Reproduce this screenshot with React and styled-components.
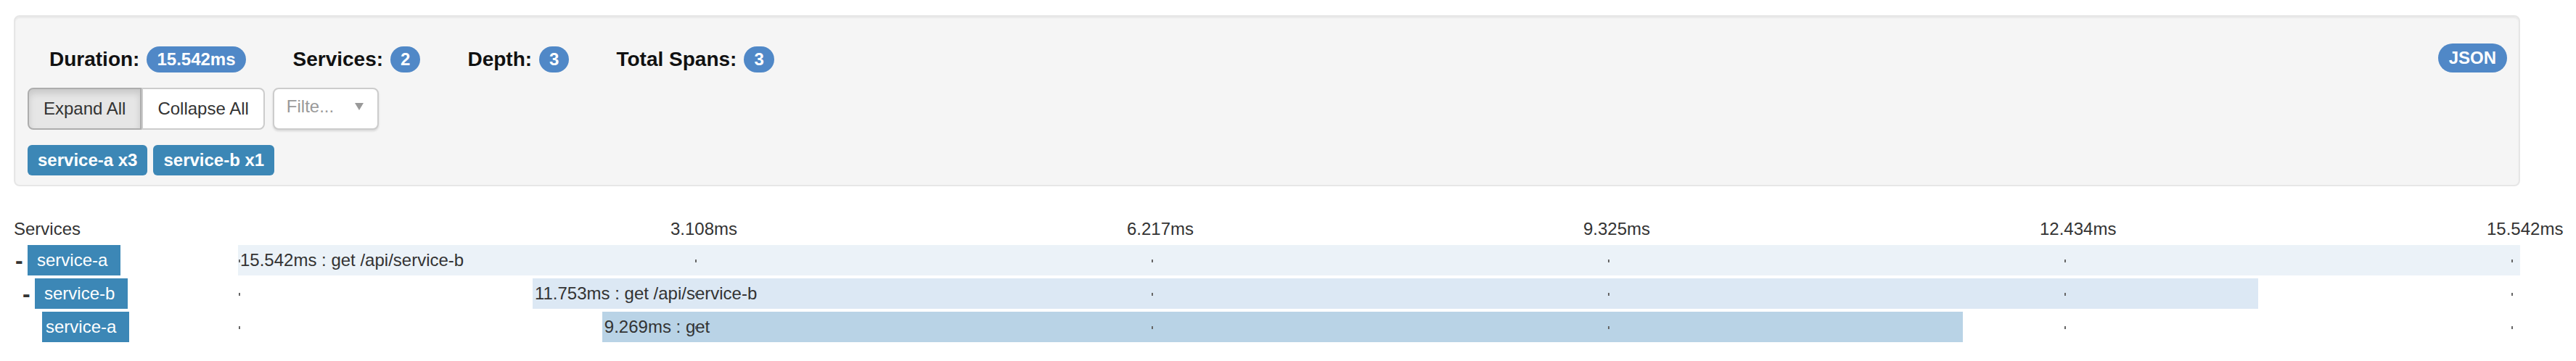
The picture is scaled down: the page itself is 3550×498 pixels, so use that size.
import React from 'react';
import styled, { createGlobalStyle } from 'styled-components';

const GlobalStyle = createGlobalStyle`
  html, body { margin: 0; padding: 0; background: #fff; }
  body {
    font-family: "Liberation Sans", Arial, Helvetica, sans-serif;
    color: #333;
  }
  * { box-sizing: border-box; }
`;

const Page = styled.div`
  width: 3550px;
  padding: 21px 77px 0 19px;
`;

const Well = styled.div`
  height: 236px;
  background: #f5f5f5;
  border: 2px solid #e6e6e6;
  border-radius: 8px;
  box-shadow: inset 0 2px 2px rgba(0, 0, 0, 0.05);
  padding: 18px 16px 13px 17px;
`;

const SummaryRow = styled.div`
  display: flex;
  align-items: center;
  gap: 65px;
  height: 36px;
  margin: 23px 0 21px;
  padding-left: 30px;
`;

const Stat = styled.div`
  display: flex;
  align-items: center;
`;

const StatLabel = styled.span`
  font-size: 28px;
  font-weight: 700;
  line-height: 36px;
  color: #111;
`;

const Badge = styled.span`
  display: inline-block;
  margin-left: 10px;
  padding: 6px 14px;
  font-size: 24px;
  font-weight: 700;
  line-height: 24px;
  color: #fff;
  background: #5088c7;
  border-radius: 20px;
`;

const JsonBadge = styled(Badge)`
  margin: -4px 0 0 auto;
  padding: 8px 15px;
  cursor: pointer;
`;

const ControlsRow = styled.div`
  display: flex;
  gap: 11px;
  height: 58px;
  margin-bottom: 21px;
`;

const BtnGroup = styled.div`
  display: flex;
`;

const Btn = styled.button`
  font-family: inherit;
  font-size: 24px;
  line-height: 34px;
  padding: 10px 20px;
  color: #333;
  background: ${p => (p.$active ? '#e6e6e6' : '#fff')};
  border: 2px solid ${p => (p.$active ? '#adadad' : '#ccc')};
  box-shadow: ${p => (p.$active ? 'inset 0 6px 10px rgba(0,0,0,0.125)' : 'none')};
  border-radius: ${p => (p.$first ? '8px 0 0 8px' : '0 8px 8px 0')};
  ${p => (!p.$first ? 'border-left-color: #ccc;' : '')}
  margin: 0;
  cursor: pointer;
`;

const Select = styled.div`
  width: 146px;
  height: 58px;
  display: flex;
  align-items: center;
  justify-content: space-between;
  padding: 0 19px 6px 17px;
  background: #fff;
  border: 2px solid #ccc;
  border-radius: 8px;
  box-shadow: 0 2px 3px rgba(0, 0, 0, 0.12);
`;

const Placeholder = styled.span`
  font-size: 24px;
  color: #999;
`;

const Caret = styled.span`
  width: 0;
  height: 0;
  border-left: 6px solid transparent;
  border-right: 6px solid transparent;
  border-top: 10px solid #999;
`;

const TagRow = styled.div`
  display: flex;
  gap: 8px;
`;

const ServiceTag = styled.span`
  display: inline-block;
  padding: 9px 14px;
  font-size: 24px;
  font-weight: 700;
  line-height: 24px;
  color: #fff;
  background: #3c87b6;
  border-radius: 6px;
`;

const Timeline = styled.div`
  margin-top: 42px;
`;

const TimelineHeader = styled.div`
  display: grid;
  grid-template-columns: 309px 1fr;
  height: 34px;
  margin-bottom: 5px;
  font-size: 24px;
  line-height: 34px;
  color: #333;
`;

const HeaderTrack = styled.div`
  position: relative;
`;

const TimeLabel = styled.span`
  position: absolute;
  top: 0;
  white-space: nowrap;
`;

const Rows = styled.div`
  display: flex;
  flex-direction: column;
  gap: 4px;
`;

const SpanRow = styled.div`
  display: grid;
  grid-template-columns: 309px 1fr;
  height: 42px;
`;

const LabelCell = styled.div`
  display: flex;
  align-items: center;
  padding-left: ${p => 2 + p.$depth * 10}px;
`;

const Expander = styled.span`
  width: 11px;
  margin-right: 6px;
  font-size: 32px;
  font-weight: 700;
  line-height: 42px;
  color: #333;
  visibility: ${p => (p.$hidden ? 'hidden' : 'visible')};
`;

const NameTag = styled.span`
  height: 42px;
  padding: 0 18px 0 ${p => p.$padLeft}px;
  font-size: 24px;
  line-height: 42px;
  color: #fff;
  background: #3c87b6;
`;

const Track = styled.div`
  position: relative;
  height: 42px;
`;

const Bar = styled.div`
  height: 42px;
  padding-left: 3px;
  font-size: 24px;
  line-height: 42px;
  color: #333;
  white-space: nowrap;
  background: ${p => p.$color};
`;

const Tick = styled.span`
  position: absolute;
  top: 50%;
  width: 2px;
  height: 4px;
  margin-top: -1px;
  background: #666;
`;

const TOTAL = 15.542;
const markers = [0, 20, 40, 60, 80, 100];
const timeLabels = ['3.108ms', '6.217ms', '9.325ms', '12.434ms', '15.542ms'];

const spans = [
  { service: 'service-a', depth: 0, expander: true, padLeft: 13, start: 0, duration: 15.542, label: '15.542ms : get /api/service-b', color: '#ebf2f8' },
  { service: 'service-b', depth: 1, expander: true, padLeft: 13, start: 2.006, duration: 11.753, label: '11.753ms : get /api/service-b', color: '#dce8f4' },
  { service: 'service-a', depth: 2, expander: false, padLeft: 5, start: 2.48, duration: 9.269, label: '9.269ms : get', color: '#b9d3e6' },
];

const tickLeft = pct => (pct === 100 ? 'calc(100% - 12px)' : `calc(${pct}% + 1px)`);
const labelLeft = (pct, i) => (i === timeLabels.length - 1 ? 'calc(100% - 46px)' : `calc(${pct}% - 33px)`);

export default function App() {
  return (
    <>
      <GlobalStyle />
      <Page>
        <Well>
          <SummaryRow>
            <Stat>
              <StatLabel>Duration:</StatLabel>
              <Badge>15.542ms</Badge>
            </Stat>
            <Stat>
              <StatLabel>Services:</StatLabel>
              <Badge>2</Badge>
            </Stat>
            <Stat>
              <StatLabel>Depth:</StatLabel>
              <Badge>3</Badge>
            </Stat>
            <Stat>
              <StatLabel>Total Spans:</StatLabel>
              <Badge>3</Badge>
            </Stat>
            <JsonBadge>JSON</JsonBadge>
          </SummaryRow>
          <ControlsRow>
            <BtnGroup>
              <Btn $first $active>Expand All</Btn>
              <Btn>Collapse All</Btn>
            </BtnGroup>
            <Select>
              <Placeholder>Filte...</Placeholder>
              <Caret />
            </Select>
          </ControlsRow>
          <TagRow>
            <ServiceTag>service-a x3</ServiceTag>
            <ServiceTag>service-b x1</ServiceTag>
          </TagRow>
        </Well>

        <Timeline>
          <TimelineHeader>
            <span>Services</span>
            <HeaderTrack>
              {timeLabels.map((t, i) => (
                <TimeLabel key={t} style={{ left: labelLeft(markers[i + 1], i) }}>
                  {t}
                </TimeLabel>
              ))}
            </HeaderTrack>
          </TimelineHeader>
          <Rows>
            {spans.map((s, idx) => (
              <SpanRow key={idx}>
                <LabelCell $depth={s.depth}>
                  <Expander $hidden={!s.expander}>-</Expander>
                  <NameTag $padLeft={s.padLeft}>{s.service}</NameTag>
                </LabelCell>
                <Track>
                  <Bar
                    $color={s.color}
                    style={{
                      marginLeft: `${(s.start / TOTAL) * 100}%`,
                      width: `${(s.duration / TOTAL) * 100}%`,
                    }}
                  >
                    {s.label}
                  </Bar>
                  {markers.map(m => (
                    <Tick key={m} style={{ left: tickLeft(m) }} />
                  ))}
                </Track>
              </SpanRow>
            ))}
          </Rows>
        </Timeline>
      </Page>
    </>
  );
}
